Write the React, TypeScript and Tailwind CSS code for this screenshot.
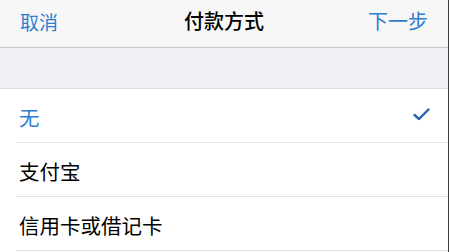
const rows = [
  { label: "无", selected: true },
  { label: "支付宝", selected: false },
  { label: "信用卡或借记卡", selected: false },
];

export default function App() {
  return (
    <div
      className="w-[449px] h-[252px] overflow-hidden bg-white border-r border-[#3c3c3c]"
      style={{ fontFamily: '"Noto Sans CJK SC", "Noto Sans", sans-serif' }}
    >
      <div className="h-[48px] bg-[#f7f7f7] border-b border-[#c8c8cc] grid grid-cols-3 items-center px-[20px] pb-[5px]">
        <button className="justify-self-start text-[19px] text-[#2f7dd1] leading-none">取消</button>
        <div className="justify-self-center text-[20px] font-medium text-black leading-none whitespace-nowrap">付款方式</div>
        <button className="justify-self-end text-[20px] text-[#2f7dd1] leading-none">下一步</button>
      </div>
      <div className="h-[41px] bg-[#efeff4] border-b border-[#dcdce0]" />
      <div className="pl-[16px]">
        {rows.map((r) => (
          <div
            key={r.label}
            className="h-[54px] border-b border-[#e2e2e4] flex items-center justify-between pl-[3px] pr-[18px]"
          >
            <span className={`text-[20.5px] leading-none pt-[3px] ${r.selected ? "text-[#2f7dd1]" : "text-black"}`}>
              {r.label}
            </span>
            {r.selected && (
              <svg width="17" height="13" viewBox="0 0 17 13" fill="none" className="mt-[-2px]">
                <path d="M1.5 7 L6 11 L15.5 1.5" stroke="#2a62b0" strokeWidth="2.4" strokeLinecap="round" strokeLinejoin="round" />
              </svg>
            )}
          </div>
        ))}
      </div>
    </div>
  );
}
